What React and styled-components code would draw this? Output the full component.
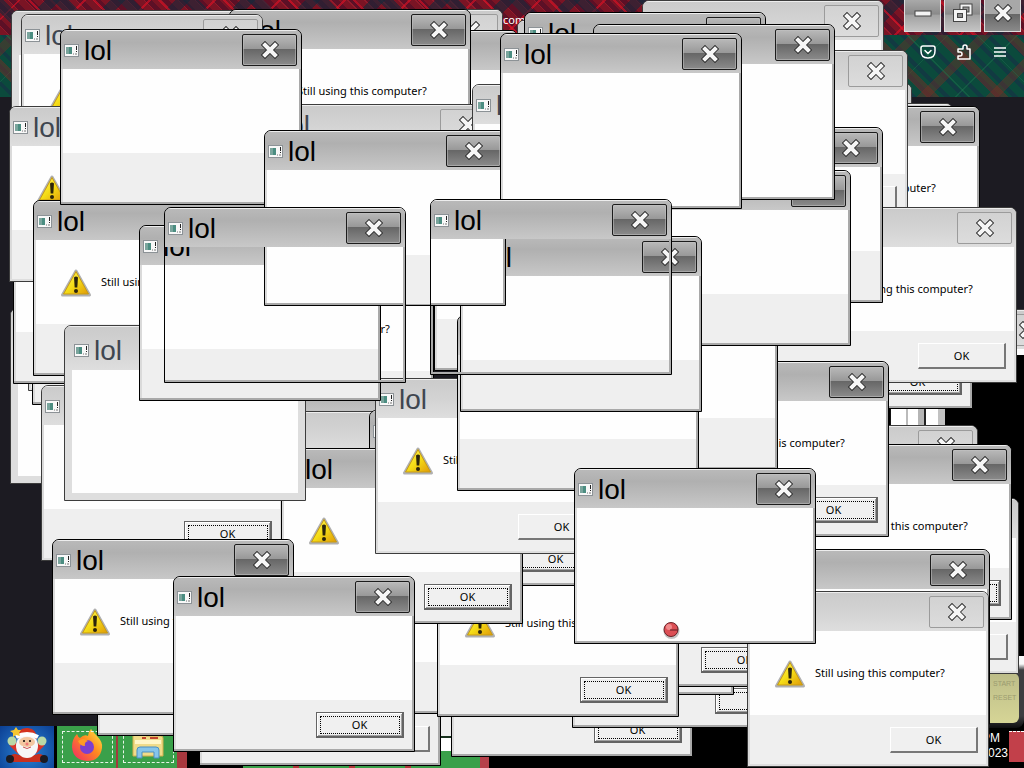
import React from "react";
import styled, { createGlobalStyle, css } from "styled-components";

const Global = createGlobalStyle`
  * { box-sizing: border-box; }
  html, body { margin: 0; background: #000; }
  body { font-family: "Noto Sans", "Open Sans", sans-serif; font-size: 11px; line-height: 16px; color: #000; }
  button { font: inherit; color: inherit; padding: 0; margin: 0; }
`;

const Desktop = styled.main`
  position: relative;
  display: flex;
  flex-direction: column;
  min-height: 100vh;
  overflow: hidden;
  background: #000;
`;

/* ---------- browser behind the dialogs ---------- */

const Browser = styled.section`
  flex: 1;
  display: flex;
  flex-direction: column;
  background: linear-gradient(90deg, #1c1b22 0 60%, transparent 60%),
    linear-gradient(#1c1b22 0 350px, #000 350px);
`;

const TabStrip = styled.header`
  display: flex;
  justify-content: flex-end;
  gap: 3px;
  height: 35px;
  padding-right: 3px;
  background:
    repeating-linear-gradient(45deg, transparent 0 16px, #14283a99 16px 27px, transparent 27px 44px, #e0102499 44px 46px),
    repeating-linear-gradient(-45deg, transparent 0 16px, #14283a99 16px 27px, transparent 27px 44px, #e0102499 44px 46px),
    repeating-linear-gradient(45deg, #7a1424 0 6px, #931a2a 6px 7px, #5c1026 7px 12px);
`;

const ToolStrip = styled.div`
  display: flex;
  justify-content: flex-end;
  align-items: flex-start;
  gap: 20px;
  height: 62px;
  padding: 9px 16px 0 0;
  background:
    repeating-linear-gradient(45deg, transparent 0 18px, #7a2c2277 18px 27px, transparent 27px 48px, #1f775066 48px 49px),
    repeating-linear-gradient(-45deg, transparent 0 18px, #7a2c2266 18px 27px, transparent 27px 48px, #1f775066 48px 49px),
    repeating-linear-gradient(45deg, #0b4a3c 0 8px, #123a42 8px 12px);
`;

const ToolButton = styled.button`
  width: 16px;
  height: 16px;
  border: 0;
  background: none;
  svg { display: block; }
`;

const StripButton = styled.button`
  display: grid;
  place-items: center;
  width: 37px;
  height: 32px;
  padding-bottom: 6px;
  border: 1px solid #ddd;
  border-top: 0;
  background: ${(p) =>
    p.$close
      ? "linear-gradient(#a8a8a8 0 45%, #666 45%, #8a8a8a)"
      : "linear-gradient(#a9a9a9, #8a8a8a 45%, #a2a2a2 50%, #c4c4c4)"};
`;

/* ---------- dialogs ---------- */

const Frame = styled.section`
  position: absolute;
  left: ${(p) => p.$x}px;
  top: ${(p) => p.$y}px;
  display: flex;
  flex-direction: column;
  width: 242px;
  height: 176px;
  overflow: hidden;
  border: 1px solid ${(p) => (p.$light ? "#3c3c3c" : "#000")};
  border-radius: 7px 7px 0 0;
  ${(p) => !p.$ghost && css`background: ${p.$light ? "#dedede" : "#a9a9a9"};`}
`;

const TitleBar = styled.header`
  display: flex;
  align-items: flex-start;
  flex: none;
  height: ${(p) => (p.$thick ? 44 : 39)}px;
  padding: ${(p) => (p.$thick ? "7px 4px 0 9px" : "3px 4px 0 3px")};
  border-top: 1px solid #ededed;
  background: ${(p) =>
    p.$light
      ? "linear-gradient(#cbcbcb, #d3d3d3 50%, #dedede)"
      : "linear-gradient(#b9b9b9, #b0b0b0 30%, #bababa 60%, #c8c8c8)"};
`;

const AppIcon = styled.svg`
  flex: none;
  margin-top: 10px;
`;

const Title = styled.h2`
  flex: 1;
  margin: 0 0 0 5px;
  font-family: "Liberation Sans", sans-serif;
  font-size: 28px;
  line-height: 34px;
  font-weight: 400;
  color: ${(p) => (p.$light ? "#3f4650" : "#000")};
`;

const CloseButton = styled.button`
  display: grid;
  place-items: center;
  flex: none;
  width: 55px;
  height: 32px;
  margin-left: auto;
  border-radius: 2px;
  ${(p) =>
    p.$light
      ? css`
          border: 1px solid #9b9b9b;
          background: linear-gradient(#d2d2d2, #dcdcdc);
        `
      : css`
          border: 1px solid #1c1c1c;
          background: linear-gradient(#b9b9b9, #999 45%, #666 47%, #8b8b8b);
          box-shadow: inset 0 0 0 1px #c3c3c388;
        `}
`;

const bodyKinds = {
  plain: css`
    margin: 0 2px 2px 0;
    border-left: 2px solid #dadada;
    background: #fefefe;
  `,
  thick: css`
    margin: 0 7px 7px;
    background: #fefefe;
  `,
  ghost: css`
    border: solid #adadad;
    border-width: 0 2px 2px 0;
  `,
};

const Body = styled.div`
  flex: 1;
  display: flex;
  flex-direction: column;
  ${(p) => bodyKinds[p.$kind]}
`;

const Message = styled.div`
  flex: none;
  display: flex;
  align-items: flex-start;
  height: 84px;
  padding: 28px 0 0 ${(p) => (p.$textOnly ? 56 : 24)}px;
  p { margin: 6px 0 0 9px; white-space: nowrap; }
`;

const Footer = styled.footer`
  flex: 1;
  display: flex;
  justify-content: flex-end;
  align-items: flex-start;
  padding: 12px 8px 0 0;
  background: #efefef;
`;

const OkButton = styled.button`
  width: 88px;
  height: 26px;
  background: #f0f0f0;
  ${(p) =>
    p.$focused
      ? css`
          border: 1px solid #646464;
          border-width: 1px 2px 2px 1px;
          box-shadow: inset 1px 1px #fff, inset -1px -1px #a0a0a0;
          outline: 1px dotted #000;
          outline-offset: -5px;
        `
      : css`
          border: 1px solid #fff;
          border-right: 2px solid #777;
          border-bottom: 2px solid #777;
        `}
`;

/* Leftover strip of a window that is almost covered by the others */
const Strip = styled.div`
  position: absolute;
  left: ${(p) => p.$x}px;
  top: ${(p) => p.$y}px;
  width: ${(p) => p.$w}px;
  height: ${(p) => p.$h}px;
  background: ${(p) => p.$bg};
`;

const Cross = () => (
  <svg width="20" height="18" viewBox="0 0 20 18" aria-hidden="true">
    <path d="M5 4 L15 14 M15 4 L5 14" stroke="#333" strokeWidth="6" strokeLinecap="square" fill="none" />
    <path d="M5 4 L15 14 M15 4 L5 14" stroke="#f6f6f6" strokeWidth="4" strokeLinecap="square" fill="none" />
  </svg>
);

const DialogIcon = () => (
  <AppIcon width="15" height="13" viewBox="0 0 15 13" aria-hidden="true">
    <rect x=".5" y=".5" width="14" height="12" fill="#f8f8f8" stroke="#8c9296" />
    <rect x="2" y="3" width="6" height="7" fill="#4b8d81" />
    <rect x="2" y="3" width="3" height="7" fill="#7aa59d" />
    <path d="M12.500 2v4M12.500 7v1" stroke="#222" />
    <path d="M9 10h1M11 10h2" stroke="#777" />
  </AppIcon>
);

const Warning = () => (
  <svg width="32" height="30" viewBox="0 0 32 30" aria-hidden="true">
    <defs>
      <linearGradient id="warn" x1="0" y1="0" x2="1" y2="1">
        <stop offset="0" stopColor="#fff36a" />
        <stop offset=".5" stopColor="#f5dd16" />
        <stop offset="1" stopColor="#e09a08" />
      </linearGradient>
    </defs>
    <path d="M16 3 L29.500 27 H2.500 Z" fill="#b5b5b5" stroke="#b0b0b0" strokeWidth="3" strokeLinejoin="round" />
    <path d="M16 3.500 L28.500 26 H3.500 Z" fill="url(#warn)" stroke="#c79a12" strokeLinejoin="round" />
    <path d="M14 9.500 q2 -2 4 0 L17.300 19.500 H14.700 Z" fill="#2b240c" />
    <circle cx="16" cy="23" r="2" fill="#2b240c" />
  </svg>
);

function Dialog({ x, y, light, ghost, thick, blank, title = true, close = true, warning, msg, textOnly, ok, label = "OK" }) {
  const kind = ghost ? "ghost" : thick ? "thick" : "plain";
  return (
    <Frame $x={x} $y={y} $light={light} $ghost={ghost}>
      <TitleBar $light={light} $thick={thick}>
        {title && <DialogIcon />}
        {title && <Title $light={light}>lol</Title>}
        {close && (
          <CloseButton $light={light} aria-label="Close">
            <Cross />
          </CloseButton>
        )}
      </TitleBar>
      <Body $kind={kind}>
        {kind === "plain" && !blank && (
          <>
            <Message $textOnly={textOnly}>
              {(msg || warning) && !textOnly && <Warning />}
              {msg && <p>Still using this computer?</p>}
            </Message>
            <Footer>
              {ok && <OkButton $focused={ok === "focused"} aria-label="OK">{label}</OkButton>}
            </Footer>
          </>
        )}
      </Body>
    </Frame>
  );
}

/* ordered from the bottom of the stack to the top */
const backLayer = [
  { x: 11, y: 10, light: 1, thick: 1, title: false, close: false },
  { x: 10, y: 308, light: 1, thick: 1, title: false, close: false },
  { x: 28, y: 215, light: 1, title: false, close: false },
  { x: 32, y: 229, title: false, close: false },
  { x: 13, y: 208, title: false, close: false },
  { x: 261, y: 9, light: 1, title: false },
  { x: 276, y: 30, title: false, close: false },
  { x: 229, y: 9, msg: 1 },
  { x: 21, y: 14, light: 1, warning: 1 },
  { x: 9, y: 106, light: 1, warning: 1, close: false },
  { x: 258, y: 104, light: 1 },
  { x: 472, y: 84, light: 1, close: false },
  { x: 642, y: 0, light: 1, title: false },
  { x: 517, y: 20, light: 1, title: false, close: false },
  { x: 524, y: 12 },
  { x: 670, y: 83, light: 1, title: false, close: false },
  { x: 711, y: 103, light: 1, title: false, close: false },
  { x: 738, y: 106, title: false, msg: 1 },
  { x: 666, y: 50, light: 1, title: false, ok: "plain", label: "" },
  { x: 818, y: 309, light: 1, title: false, blank: 1 },
];

const middleLayer = [
  { x: 434, y: 195, title: false, close: false },
  { x: 731, y: 233, title: false, close: false, ok: "focused" },
  { x: 775, y: 207, light: 1, title: false, msg: 1, ok: "plain" },
  { x: 641, y: 127, title: false },
  { x: 736, y: 425, light: 1, title: false },
  { x: 777, y: 498, light: 1, title: false, close: false, ok: "plain", label: "" },
  { x: 770, y: 444, title: false, msg: 1, textOnly: 1, ok: "focused", label: "" },
  { x: 647, y: 361, title: false, msg: 1, ok: "focused" },
  { x: 536, y: 294, title: false, close: false },
  { x: 609, y: 170, title: false },
  { x: 593, y: 24, title: false, blank: 1 },
  { x: 192, y: 247, title: false, close: false, msg: 1 },
  { x: 200, y: 378, title: false, close: false },
  { x: 180, y: 411, light: 1, title: false, close: false },
  { x: 199, y: 590, title: false, close: false, ok: "plain", label: "" },
  { x: 220, y: 538, title: false, close: false },
  { x: 451, y: 581, title: false, close: false, ok: "focused" },
  { x: 572, y: 552, title: false, close: false, ok: "focused", label: "" },
  { x: 492, y: 519, title: false, close: false },
  { x: 558, y: 511, title: false, close: false, ok: "focused" },
  { x: 437, y: 541, title: false, close: false, msg: 1, ok: "focused" },
  { x: 369, y: 410, close: false, ok: "focused" },
  { x: 97, y: 560, title: false, close: false },
  { x: 41, y: 385, light: 1, close: false, ok: "focused" },
  { x: 281, y: 448, close: false, warning: 1, ok: "focused" },
  { x: 375, y: 378, light: 1, close: false, msg: 1, ok: "plain" },
  { x: 457, y: 315, title: false, close: false },
  { x: 460, y: 236 },
  { x: 33, y: 200, close: false, msg: 1 },
  { x: 64, y: 325, light: 1, thick: 1, close: false },
  { x: 60, y: 29 },
  { x: 139, y: 225, close: false },
  { x: 264, y: 130, blank: 1 },
];

const frontLayer = [
  { x: 500, y: 33, blank: 1 },
  { x: 164, y: 207, ghost: 1 },
  { x: 430, y: 199, ghost: 1 },
  { x: 52, y: 539, msg: 1 },
  { x: 173, y: 576, ok: "focused" },
  { x: 748, y: 549, title: false },
  { x: 747, y: 591, light: 1, title: false, msg: 1, ok: "plain" },
  { x: 574, y: 468, blank: 1 },
];

const windowEdges =
  "linear-gradient(90deg, #111 1px, #fff 1px 16px, #bbb 16px 18px, #fff 18px 28px, #b5b5b5 28px 34px, #222 34px 36px, #fff 36px 48px, #c2c2c2 48px)";

/* ---------- page title, gadget, ball ---------- */

const TabText = styled.span`
  position: absolute;
  left: 503px;
  top: 12px;
  color: #fff;
`;

const Gadget = styled.div`
  position: absolute;
  left: 982px;
  top: 656px;
  width: 42px;
  height: 72px;
  padding: 17px 5px 4px 3px;
  border-radius: 0 0 8px 0;
  background: linear-gradient(#fafafa 0 8px, #3d3d40 14px 60px, #0d0d0f);
`;

const GadgetFace = styled.div`
  height: 50px;
  padding: 4px 0 0 8px;
  border-radius: 0 6px 6px 0;
  background: linear-gradient(#bdbd88, #d6d596);
  color: #9b9b70;
  font: 7px/14px "Liberation Sans", sans-serif;
`;

const Ball = styled.svg`
  position: absolute;
  left: 661px;
  top: 620px;
`;

/* ---------- task bar ---------- */

const TaskBar = styled.nav`
  display: flex;
  flex: none;
  height: 42px;
  background: #000;
`;

const StartButton = styled.button`
  width: 54px;
  margin-right: 3px;
  border: 0;
  background: radial-gradient(circle at 50% 60%, #2c86d8, #0b3e92);
`;

const TaskButton = styled.button`
  width: 61px;
  border: 0;
  border-right: 2px solid #a33a3e;
  background: #3aa04a;
  outline: 1px dashed #e8f4e8;
  outline-offset: -6px;
`;

const Ribbon = styled.div`
  width: ${(p) => p.$w}px;
  background: ${(p) => p.$bg};
`;

const Clock = styled.time`
  margin-left: auto;
  padding: 5px 1px 0 0;
  color: #fff;
  font: 12px/15px "Liberation Sans", sans-serif;
  text-align: right;
  span { display: block; }
  span:first-child { padding-right: 8px; }
`;

const ShowDesktop = styled.button`
  width: 15px;
  height: 31px;
  margin-top: 5px;
  border: 0;
  border-top: 1px dashed #fff;
  background: #c2404a;
`;

const Santa = () => (
  <svg width="42" height="38" viewBox="0 0 42 38" aria-hidden="true">
    <path d="M3 32 q3 -6 10 -3 h16 q7 -3 10 3 v4 H3z" fill="#c9301f" />
    <circle cx="4" cy="33" r="4" fill="#1b1b22" /><circle cx="38" cy="33" r="4" fill="#1b1b22" />
    <path d="M6 17 l8 8 M36 17 l-8 8" stroke="#d8352a" strokeWidth="7" />
    <circle cx="6" cy="15" r="4.500" fill="#b9d9a7" /><circle cx="36" cy="15" r="4.500" fill="#b9d9a7" />
    <path d="M10 12 Q12 1 22 2 Q31 3 31 13 Z" fill="#d4321f" />
    <ellipse cx="21" cy="20" rx="11" ry="12" fill="#f7f7f7" />
    <ellipse cx="21" cy="16" rx="8" ry="5" fill="#f3c7a0" />
    <path d="M10 11 Q21 5 32 11" stroke="#fff" strokeWidth="4" fill="none" />
    <circle cx="18" cy="15" r="1" /><circle cx="24" cy="15" r="1" />
    <circle cx="21" cy="18" r="1.500" fill="#e77" />
    <path d="M17 21 q4 3 8 0" stroke="#c55" fill="none" />
    <path d="M10 1 l2 3 3 0 -2 3 1 3 -4 -1 -3 2 0 -4 -3 -2 4 -1z" fill="#f6c62f" />
  </svg>
);

const Firefox = () => (
  <svg width="34" height="34" viewBox="0 0 34 34" aria-hidden="true">
    <defs>
      <linearGradient id="fox" x1="1" y1="0" x2="0" y2="1">
        <stop offset="0" stopColor="#fff04a" /><stop offset=".45" stopColor="#ff8a1f" /><stop offset="1" stopColor="#f0246a" />
      </linearGradient>
    </defs>
    <path d="M21 1 Q24 5 27 8 Q33 14 32 20 Q30 33 17 33 Q3 32 2 19 Q2 11 7 6 Q8 9 10 10 Q14 6 18 8 Q18 4 21 1Z" fill="url(#fox)" />
    <circle cx="17" cy="19" r="7" fill="#7b3fd0" />
    <path d="M8 13 Q13 9 18 13 Q14 14 15 18 Q10 18 8 13Z" fill="#ff9b26" />
  </svg>
);

const Explorer = () => (
  <svg width="34" height="30" viewBox="0 0 34 30" aria-hidden="true">
    <path d="M2 2 h13 v4 h15 q2 0 2 2 v18 H2z" fill="#f0dc8a" stroke="#d1ae4c" />
    <path d="M11 8h4M19 8h8" stroke="#c2442e" strokeWidth="2" />
    <path d="M4 12h26" stroke="#fff6c8" strokeWidth="4" />
    <path d="M6 28 V20 q0 -3 3 -3 h16 q3 0 3 3 v8 h-5 v-6 H11 v6z" fill="#86c5ea" stroke="#4a8fc2" />
  </svg>
);

export default function App() {
  return (
    <Desktop>
      <Global />
      <Browser>
        <TabStrip>
          <StripButton aria-label="Minimize">
            <svg width="18" height="8"><rect x="1" y="2" width="16" height="5" fill="#f4f4f4" stroke="#444" /></svg>
          </StripButton>
          <StripButton aria-label="Restore">
            <svg width="22" height="22" fill="none">
              <rect x="9.500" y="3.500" width="9" height="8" stroke="#444" strokeWidth="4" />
              <rect x="9.500" y="3.500" width="9" height="8" stroke="#f4f4f4" strokeWidth="2" />
              <rect x="3.500" y="9.500" width="9" height="8" fill="#888" stroke="#444" strokeWidth="5" />
              <rect x="3.500" y="9.500" width="9" height="8" stroke="#f4f4f4" strokeWidth="3" />
            </svg>
          </StripButton>
          <StripButton $close aria-label="Close browser"><Cross /></StripButton>
        </TabStrip>
        <ToolStrip>
          <ToolButton aria-label="Save to Pocket">
            <svg width="16" height="16" fill="none" stroke="#fff" strokeWidth="1.500" strokeLinecap="round" strokeLinejoin="round">
              <path d="M3 2h10q2 0 2 2v3q0 7 -7 7q-7 0 -7 -7V4q0 -2 2 -2z M5 6.500l3 3 3-3" />
            </svg>
          </ToolButton>
          <ToolButton aria-label="Extensions">
            <svg width="16" height="16" fill="none" stroke="#fff" strokeWidth="1.500" strokeLinejoin="round">
              <path d="M2 5h5V3q0-2 2-2t2 2v2h3v10H2v-3h2q2 0 2-2t-2-2H2z" />
            </svg>
          </ToolButton>
          <ToolButton aria-label="Menu">
            <svg width="16" height="16" stroke="#fff" strokeWidth="1.500"><path d="M2 4h12M2 8h12M2 12h12" /></svg>
          </ToolButton>
        </ToolStrip>
      </Browser>

      <TaskBar>
        <StartButton aria-label="Start"><Santa /></StartButton>
        <TaskButton aria-label="Firefox"><Firefox /></TaskButton>
        <TaskButton aria-label="File Explorer"><Explorer /></TaskButton>
        <Ribbon $w={8} $bg="#a8383e" />
        <Ribbon $w={56} $bg="#000" />
        <Ribbon $w={237} $bg="linear-gradient(90deg, transparent 80%, #3aa04a 80%), repeating-linear-gradient(90deg, #3aa04a 0 50px, #b03a3a 50px 56px)" />
        <Ribbon $w={9} $bg="#b5404a" />
        <Clock><span>PM</span><span>2023</span></Clock>
        <ShowDesktop aria-label="Show desktop" />
      </TaskBar>

      <TabText>com</TabText>
      <Gadget><GadgetFace>START<br />RESET</GadgetFace></Gadget>
      {backLayer.map((d, i) => <Dialog key={i} {...d} />)}
      <Strip $x={816} $y={355} $w={208} $h={144} $bg="#000" />
      <Strip $x={440} $y={716} $w={12} $h={35} $bg="linear-gradient(#efefef 0 20px, #17311d 20px 22px, #fff 22px)" />
      <Strip $x={890} $y={408} $w={55} $h={17} $bg={windowEdges} />
      {middleLayer.map((d, i) => <Dialog key={i} {...d} />)}
      <Strip $x={405} $y={255} $w={26} $h={49} $bg="#efefef" />
      {frontLayer.map((d, i) => <Dialog key={i} {...d} />)}
      <Ball width="20" height="20" viewBox="0 0 20 20" aria-hidden="true">
        <circle cx="10.500" cy="11" r="8" fill="#9999" />
        <circle cx="10" cy="9.500" r="7" fill="#dc4f55" stroke="#6b2228" />
        <circle cx="8" cy="7" r="3" fill="#f08a8c" />
        <path d="M9 10h8" stroke="#5d1c22" />
      </Ball>
    </Desktop>
  );
}
